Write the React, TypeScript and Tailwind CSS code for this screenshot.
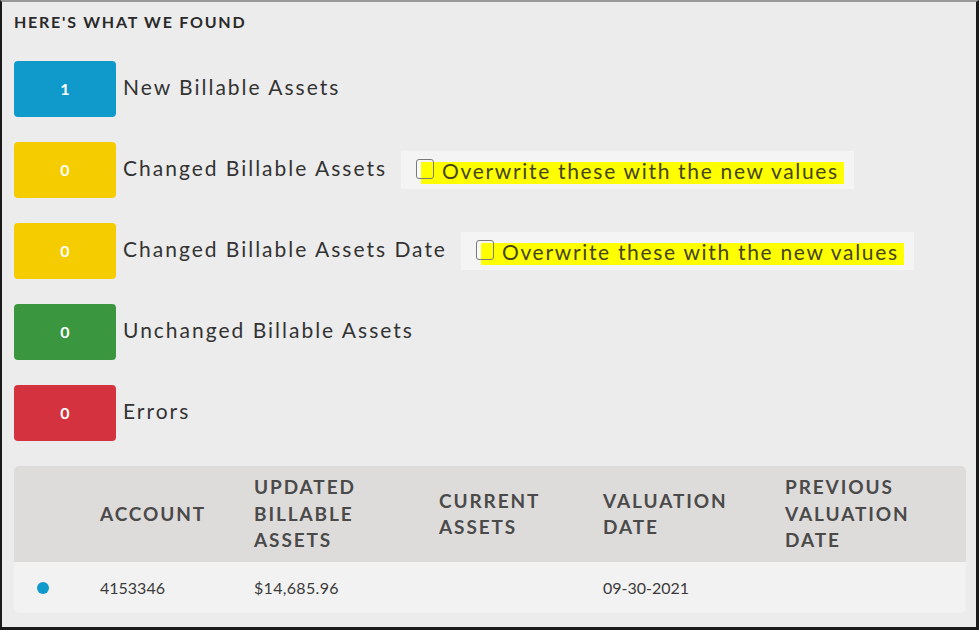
import React from 'react';

type Stat = { count: number; label: string; color: string; overwrite?: boolean };

const stats: Stat[] = [
  { count: 1, label: 'New Billable Assets', color: 'bg-[#0f9acb]' },
  { count: 0, label: 'Changed Billable Assets', color: 'bg-[#f5cc00]', overwrite: true },
  { count: 0, label: 'Changed Billable Assets Date', color: 'bg-[#f5cc00]', overwrite: true },
  { count: 0, label: 'Unchanged Billable Assets', color: 'bg-[#3a963f]' },
  { count: 0, label: 'Errors', color: 'bg-[#d4323e]' },
];

const Overwrite = () => (
  <div className="ml-[14px] flex h-[38px] items-center bg-[#f4f4f4] pl-[20px] pr-[10px]">
    <span className="relative mt-[5px] flex h-[22px] items-center bg-[#ffff00] pl-[21px] pr-[5px] text-[21px] tracking-[0.08em] text-[#45441c]">
      <span className="absolute -left-[5px] -top-[3px] h-[20px] w-[18px] rounded-[3px] border border-[#7a7a7a] bg-[linear-gradient(90deg,#fafafa_4px,transparent_4px)]" />
      <span className="-mt-[4px]">Overwrite these with the new values</span>
    </span>
  </div>
);

const App = () => {
  return (
    <div
      className="h-[630px] w-[979px] overflow-hidden border-t-2 border-l-2 border-r-[3px] border-b-[3px] border-t-[#9a9a9a] border-l-[#1a1a1a] border-r-[#1a1a1a] border-b-[#1a1a1a] bg-[#ececec] pl-[12px] pr-[10px]"
      style={{ fontFamily: 'Lato, "Noto Sans", sans-serif' }}
    >
      <h2 className="mt-[10px] h-[20px] text-[16px] font-bold leading-[20px] tracking-[0.11em] text-[#2a2a2a]">
        HERE&apos;S WHAT WE FOUND
      </h2>

      <div className="mt-[29px] flex flex-col gap-[25px]">
        {stats.map((s) => (
          <div key={s.label} className="flex h-[56px] items-center">
            <div
              className={`flex h-[56px] w-[102px] items-center justify-center rounded-[4px] ${s.color} text-[16px] font-bold text-white`}
            >
              {s.count}
            </div>
            <span className="-mt-[4px] ml-[7px] text-[21px] tracking-[0.095em] text-[#333]">{s.label}</span>
            {s.overwrite && <Overwrite />}
          </div>
        ))}
      </div>

      <div className="mt-[25px] w-[952px] overflow-hidden rounded-[5px]">
        <div className="grid h-[96px] grid-cols-[86px_154px_185px_164px_182px_1fr] items-center bg-[#dedcdb] text-[19px] font-bold uppercase leading-[26.5px] tracking-[0.1em] text-[#4a4a4a]">
          <div />
          <div>Account</div>
          <div>
            Updated
            <br />
            Billable
            <br />
            Assets
          </div>
          <div>
            Current
            <br />
            Assets
          </div>
          <div>
            Valuation
            <br />
            Date
          </div>
          <div>
            Previous
            <br />
            Valuation
            <br />
            Date
          </div>
        </div>
        <div className="grid h-[51px] grid-cols-[86px_154px_185px_164px_182px_1fr] items-center bg-[#f2f2f2] text-[16px] text-[#3a3a3a]">
          <div className="pl-[23px]">
            <span className="block h-[12px] w-[12px] rounded-full bg-[#0f9acb]" />
          </div>
          <div>4153346</div>
          <div className="tracking-[0.02em]">$14,685.96</div>
          <div />
          <div>09-30-2021</div>
          <div />
        </div>
      </div>
    </div>
  );
};

export default App;
